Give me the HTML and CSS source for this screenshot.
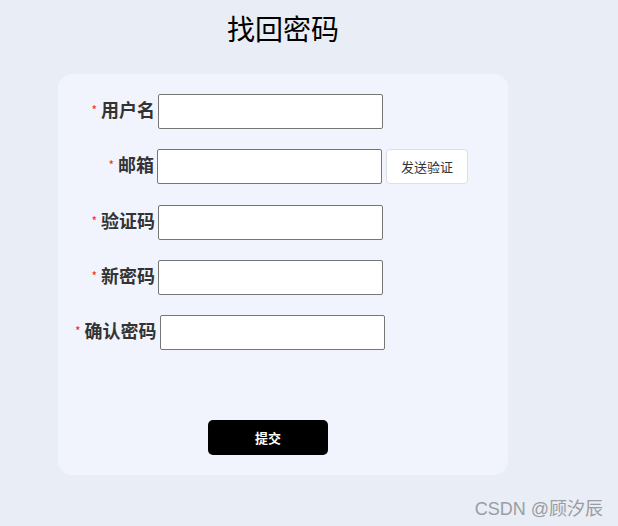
FILE: index.html
```html
<!DOCTYPE html>
<html lang="zh">
<head>
<meta charset="utf-8">
<link rel="stylesheet" href="styles.css">
</head>
<body>
<div class="wrap">
  <h1 class="title">找回密码</h1>
  <form class="card">
    <div class="row"><label class="lbl"><span class="req">*</span>用户名</label><input class="inp" type="text"></div>
    <div class="row"><label class="lbl lbl-short"><span class="req">*</span>邮箱</label><input class="inp" type="text"><button type="button" class="send">发送验证</button></div>
    <div class="row"><label class="lbl"><span class="req">*</span>验证码</label><input class="inp" type="text"></div>
    <div class="row"><label class="lbl"><span class="req">*</span>新密码</label><input class="inp" type="password"></div>
    <div class="row"><label class="lbl"><span class="req">*</span>确认密码</label><input class="inp" type="password"></div>
    <div class="submit-row"><button type="button" class="submit">提交</button></div>
  </form>
</div>
<div class="mark">CSDN @顾汐辰</div>
</body>
</html>
```
FILE: styles.css
```css
html, body {
  margin: 0;
  padding: 0;
  height: 100%;
}
body {
  background: #e9edf5;
  font-family: "Noto Sans CJK SC", "Noto Sans", sans-serif;
  position: relative;
  overflow: hidden;
}
.wrap {
  width: 450px;
  margin-left: 58px;
  padding-top: 11px;
}
.title {
  margin: 0 0 29px;
  font-size: 28px;
  line-height: 34px;
  font-weight: normal;
  text-align: center;
  color: #000;
}
.card {
  background: #f1f4fc;
  border-radius: 14px;
  height: 401px;
  box-sizing: border-box;
  padding: 20px 0 0 17px;
  display: flex;
  flex-direction: column;
  gap: 20px;
}
.row {
  display: flex;
  align-items: center;
  height: 35px;
}
.row + .row {
  margin-top: 0.25px;
}
.lbl {
  min-width: 80px;
  text-align: right;
  font-size: 18px;
  line-height: 18px;
  font-weight: bold;
  color: #333;
  white-space: nowrap;
  margin-right: 3px;
  position: relative;
  top: -2px;
}
.lbl-short {
  min-width: 79px;
}
.req {
  color: #f22;
  font-size: 12px;
  font-weight: normal;
  margin-right: 4px;
  vertical-align: 2px;
}
.inp {
  width: 225px;
  height: 35px;
  box-sizing: border-box;
  border: 1px solid #767676;
  border-radius: 2px;
  background: #fff;
  margin: 0;
}
.send {
  margin-left: 4px;
  width: 82px;
  height: 35px;
  box-sizing: border-box;
  background: #fff;
  border: 1px solid #dcdfe6;
  border-radius: 4px;
  font-family: "Noto Sans CJK SC", sans-serif;
  font-size: 13px;
  color: #333;
  padding: 0;
}
.submit-row {
  margin-top: 50px;
  padding-left: 133px;
}
.submit {
  width: 120px;
  height: 35px;
  background: #000;
  color: #fff;
  border: none;
  border-radius: 5px;
  font-family: "Noto Sans CJK SC", sans-serif;
  font-size: 13px;
  font-weight: bold;
  padding: 0;
}
.mark {
  position: absolute;
  right: 15px;
  bottom: 6px;
  font-size: 18px;
  color: #9a9da3;
  font-family: "Liberation Sans", "Noto Sans CJK SC", sans-serif;
}
```
